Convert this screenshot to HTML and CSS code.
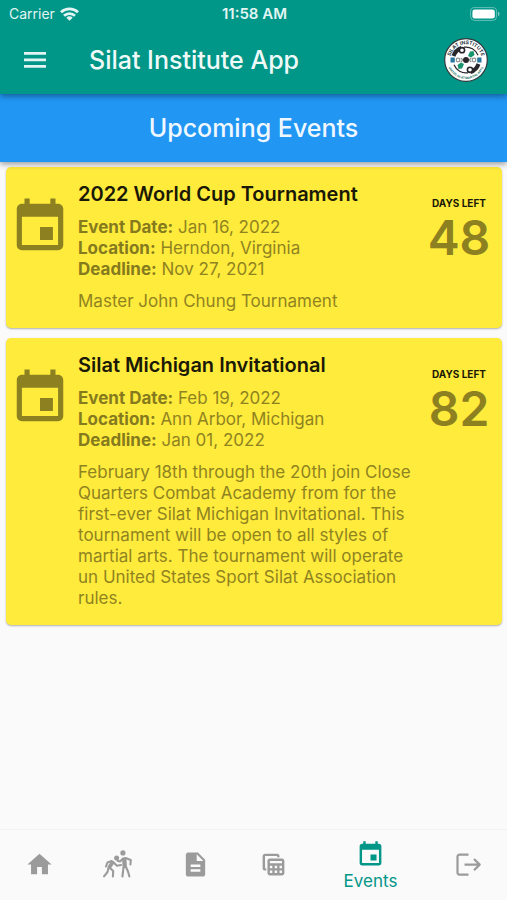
FILE: index.html
```html
<!DOCTYPE html>
<html lang="en">
<head>
<meta charset="utf-8">
<meta name="viewport" content="width=device-width, initial-scale=1">
<title>Silat Institute App</title>
<link rel="stylesheet" href="styles.css">
</head>
<body>
<svg class="defs" width="0" height="0" aria-hidden="true">
  <symbol id="event" viewBox="0 0 24 24"><path d="M17 12h-5v5h5v-5zM16 1v2H8V1H6v2H5c-1.11 0-1.99.9-1.99 2L3 19c0 1.1.89 2 2 2h14c1.1 0 2-.9 2-2V5c0-1.1-.9-2-2-2h-1V1h-2zm3 18H5V8h14v11z"/></symbol>
</svg>
<header class="top">
  <div class="status">
    <span class="carrier">Carrier
      <svg class="wifi" viewBox="0 0 19 14" aria-hidden="true"><g fill="none" stroke="currentColor" stroke-width="2.800"><path d="M1 5.200a12.400 12.400 0 0 1 17 0"/><path d="M4 8.800a8 8 0 0 1 11 0"/></g><path fill="currentColor" d="M9.500 13.800 6.300 10.800a4.700 4.700 0 0 1 6.400 0z"/></svg>
    </span>
    <span class="clock">11:58 AM</span>
    <span class="power"><svg class="battery" viewBox="0 0 30 14" aria-hidden="true"><rect x="0.600" y="0.600" width="26" height="12.800" rx="4" fill="none" stroke="#fff" stroke-opacity=".4"/><rect x="2.400" y="2.400" width="22.400" height="9.200" rx="2.400" fill="#fff"/><path d="M28 4.800c2 .6 2 3.800 0 4.400z" fill="#fff" fill-opacity=".5"/></svg></span>
  </div>
  <div class="bar">
    <button class="menu" type="button" aria-label="Menu"><svg viewBox="0 0 24 16" aria-hidden="true"><path d="M1 0h22v2.700H1zM1 6.500h22v2.700H1zM1 13h22v2.700H1z"/></svg></button>
    <h1>Silat Institute App</h1>
    <svg class="logo" viewBox="0 0 44 44" role="img" aria-label="Silat Institute">
      <defs><path id="arc-top" d="M6.200 22a15.800 15.800 0 0 1 31.600 0"/><path id="arc-bottom" d="M3 22a19 19 0 0 0 38 0"/></defs>
      <circle cx="22" cy="22" r="21.300" fill="#fff" stroke="#35383c" stroke-width="1.200"/>
      <text class="logo-top"><textPath href="#arc-top" startOffset="50%">SILAT INSTITUTE</textPath></text>
      <text class="logo-bottom"><textPath href="#arc-bottom" startOffset="50%">UNITED SILAT MARTIAL ARTS</textPath></text>
      <g fill="none" stroke="#29272b" stroke-width="4"><path d="M9.500 18a13 13 0 0 1 8-8"/><path d="M34.500 26a13 13 0 0 1-8 8"/></g>
      <g fill="none" stroke="#29272b" stroke-width="1.200"><path d="M20 9.200a13 13 0 0 1 14 8M24 34.800a13 13 0 0 1-14-8"/></g>
      <path fill="#16956f" d="m24 18 2-4.500 3.500-.5 1 4-3.500 2.500zm-4 8-2 4.500-3.500.5-1-4 3.500-2.500z"/>
      <path fill="#2978a0" d="M6.500 19.500h4.300v5H6.500zM33.200 19.500h4.300v5h-4.300z"/>
      <g fill="none" stroke="#89918e" stroke-width="1.200"><circle cx="14" cy="22" r="1.800"/><circle cx="30" cy="22" r="1.800"/><path d="m16.800 20 2 2-2 2m10.400-4-2 2 2 2"/></g>
      <g fill="#fff" stroke="#29272b" stroke-width="1.600"><circle cx="18" cy="12.200" r="2.600"/><circle cx="26" cy="31.800" r="2.600"/></g>
      <circle cx="22" cy="22" r="3" fill="#29272b"/>
    </svg>
  </div>
</header>
<h2 class="section">Upcoming Events</h2>
<main>
  <article class="card">
    <svg class="card-icon" aria-hidden="true"><use href="#event"/></svg>
    <div class="info">
      <h3>2022 World Cup Tournament</h3>
      <ul>
        <li><b>Event Date:</b> Jan 16, 2022</li>
        <li><b>Location:</b> Herndon, Virginia</li>
        <li><b>Deadline:</b> Nov 27, 2021</li>
      </ul>
      <p>Master John Chung Tournament</p>
    </div>
    <div class="days"><span class="days-label">DAYS LEFT</span><span class="days-count">48</span></div>
  </article>
  <article class="card">
    <svg class="card-icon" aria-hidden="true"><use href="#event"/></svg>
    <div class="info">
      <h3>Silat Michigan Invitational</h3>
      <ul>
        <li><b>Event Date:</b> Feb 19, 2022</li>
        <li><b>Location:</b> Ann Arbor, Michigan</li>
        <li><b>Deadline:</b> Jan 01, 2022</li>
      </ul>
      <p>February 18th through the 20th join Close Quarters Combat Academy from for the first-ever Silat Michigan Invitational. This tournament will be open to all styles of martial arts. The tournament will operate un United States Sport Silat Association rules.</p>
    </div>
    <div class="days"><span class="days-label">DAYS LEFT</span><span class="days-count">82</span></div>
  </article>
</main>
<nav class="tabs">
  <a href="#home" aria-label="Home"><svg viewBox="0 0 24 24" aria-hidden="true"><path d="M10 20v-6h4v6h5v-8h3L12 3 2 12h3v8z"/></svg></a>
  <a href="#training" aria-label="Training"><svg class="wide" viewBox="0 0 31 29" aria-hidden="true"><circle cx="14.600" cy="7.900" r="2.500"/><circle cx="20.900" cy="2.900" r="2.600"/><g fill="none" stroke="currentColor" stroke-width="2.100" stroke-linejoin="round" stroke-linecap="round"><path d="M9.500 11 5.500 12.500 4 16.500M11 12l4 3.800 4-.8"/><path stroke-width="3.800" d="M10.500 12.500 7.500 17"/><path d="M6.500 18 5.500 22 2 26.300M8 18l3.200 3-.3 5.500"/><path d="m21 8.500-3 3-2.500-.8M23.500 8l5.300 2-.4 4.500"/><path stroke-width="4.400" d="m22.300 9.500.4 6.500"/><path d="m21.500 17-.5 5-.6 4.500M24 17l2 4.500 1.400 5"/></g></svg></a>
  <a href="#documents" aria-label="Documents"><svg viewBox="0 0 24 24" aria-hidden="true"><path d="M14 2H6c-1.100 0-1.990.9-1.990 2L4 20c0 1.100.89 2 1.990 2H18c1.100 0 2-.9 2-2V8l-6-6zm2 16H8v-2h8v2zm0-4H8v-2h8v2zm-3-5V3.500L18.500 9H13z"/></svg></a>
  <a href="#tables" aria-label="Tables"><svg viewBox="0 0 24 24" aria-hidden="true"><path d="M19 7H9c-1.100 0-2 .9-2 2v10c0 1.100.9 2 2 2h10c1.100 0 2-.9 2-2V9c0-1.100-.9-2-2-2zm0 2v2H9V9h10zm-6 6v-2h2v2h-2zm2 2v2h-2v-2h2zm-4-2H9v-2h2v2zm6-2h2v2h-2v-2zm-8 4h2v2H9v-2zm8 2v-2h2v2h-2zM6 17H5c-1.100 0-2-.9-2-2V5c0-1.100.9-2 2-2h10c1.100 0 2 .9 2 2v1h-2V5H5v10h1v2z"/></svg></a>
  <a class="active" href="#events" aria-current="page"><svg aria-hidden="true"><use href="#event"/></svg><span>Events</span></a>
  <a href="#logout" aria-label="Log out"><svg viewBox="0 0 29 29" aria-hidden="true"><g fill="none" stroke="currentColor" stroke-width="2.200" stroke-linejoin="round"><path d="M14.500 4.600H5.500a2 2 0 0 0-2 2v16a2 2 0 0 0 2 2h9M10.500 14.600h15M20 9l5.700 5.600L20 20.200"/></g></svg></a>
</nav>
</body>
</html>
```
FILE: styles.css
```css
* { box-sizing: border-box; }
html { height: 100%; }
body {
  margin: 0;
  min-height: 100%;
  display: flex;
  flex-direction: column;
  background: #fafafa;
  font-family: Inter, "Liberation Sans", sans-serif;
  font-size: 17px;
  line-height: 21px;
}
h1, h2, h3, p, ul { margin: 0; padding: 0; }
ul { list-style: none; }
.defs { position: absolute; }
.top {
  position: relative;
  z-index: 2;
  background: #009688;
  color: #fff;
  box-shadow: 0 2px 6px rgba(0, 0, 0, .4);
}
.status {
  display: grid;
  grid-template-columns: 1fr auto 1fr;
  align-items: center;
  height: 26px;
  padding: 1px 7px 0 9px;
  font-size: 15px;
  color: #e2f5f2;
}
.carrier { display: flex; align-items: center; gap: 5px; font-size: 14px; }
.wifi { width: 19px; height: 14px; }
.clock { font-weight: 600; }
.power { display: flex; justify-content: flex-end; }
.battery { width: 30px; height: 14px; }
.bar {
  display: flex;
  align-items: center;
  height: 68px;
  padding: 0 19px 0 16px;
}
.menu {
  width: 40px;
  height: 40px;
  margin-right: 33px;
  padding: 12px 7px;
  border: 0;
  background: none;
  color: #e2f5f2;
}
.menu svg { display: block; width: 24px; height: 16px; fill: currentColor; }
h1, .section { font-weight: 500; line-height: 32px; }
h1 { flex: 1; font-size: 25px; color: #effaf8; }
.logo { width: 44px; height: 44px; }
.logo text { text-anchor: middle; font-weight: 700; }
.logo-top { font-size: 5px; fill: #28343b; }
.logo-bottom { font-size: 3px; fill: #26775f; }
.section {
  position: relative;
  z-index: 1;
  padding: 18px 0;
  background: #2196f3;
  color: #f0f8ff;
  font-size: 25px;
  text-align: center;
  box-shadow: 0 2px 6px rgba(0, 0, 0, .4);
}
main {
  flex: 1;
  display: flex;
  flex-direction: column;
  gap: 10px;
  padding: 5px 5px 10px 6px;
}
.card {
  display: flex;
  align-items: flex-start;
  padding: 15px 5px 16px 3px;
  border-radius: 5px;
  background: #ffeb3b;
  box-shadow: 0 1px 2px rgba(0, 0, 0, .3);
  color: #8f8321;
}
.card-icon {
  flex: none;
  width: 62px;
  height: 62px;
  margin: 14px 7px 0 0;
  fill: #8c8020;
}
.info { flex: 1; }
.info h3 { font-size: 20px; font-weight: 600; line-height: 24px; color: #1a1806; }
.info ul { margin: 11px 0; }
.info b { font-weight: 700; color: #857a1e; }
.days {
  flex: none;
  width: 76px;
  padding-top: 15px;
  display: flex;
  flex-direction: column;
  align-items: center;
}
.days-label { font-size: 10px; font-weight: 700; line-height: 12px; color: #1a1806; }
.days-count { font-size: 48px; font-weight: 600; line-height: 58px; color: #8c8020; }
.tabs {
  display: flex;
  height: 71px;
  border-top: 1px solid #f2f2f2;
}
.tabs a {
  flex: 2;
  display: flex;
  flex-direction: column;
  align-items: center;
  justify-content: center;
  gap: 2px;
  padding-bottom: 2px;
  color: #9b9b9b;
  text-decoration: none;
}
.tabs svg { width: 29px; height: 29px; fill: currentColor; }
.tabs .wide { width: 31px; }
.tabs .active { flex: 3; padding: 2px 0 0; color: #009688; }
```
